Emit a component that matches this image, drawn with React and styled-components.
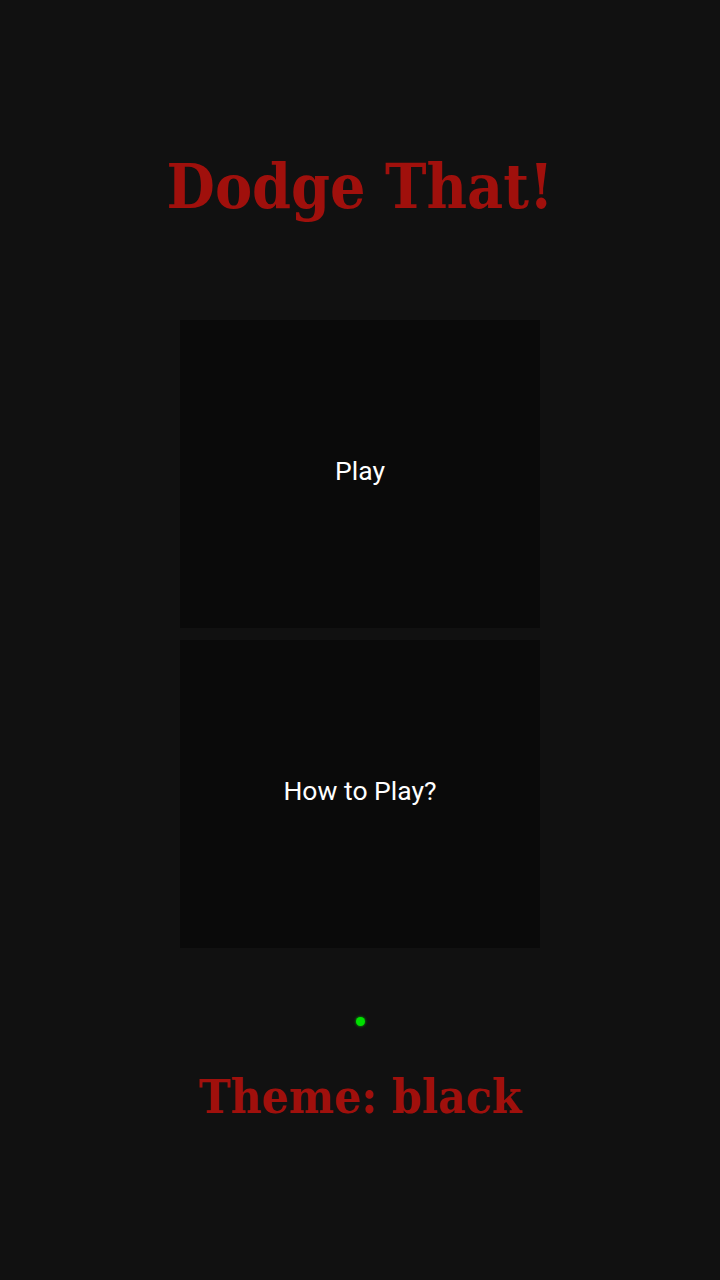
import React from "react";
import styled, { createGlobalStyle } from "styled-components";

const GlobalStyle = createGlobalStyle`
  html, body {
    margin: 0;
    padding: 0;
    background-color: #111111;
  }
`;

const Page = styled.div`
  min-height: 1280px;
  display: flex;
  flex-direction: column;
  align-items: center;
  background-color: #111111;
  box-sizing: border-box;
  padding-top: 150px;
`;

const Title = styled.h1`
  margin: 0;
  font-family: "DejaVu Serif Condensed", "DejaVu Serif", serif;
  font-stretch: condensed;
  font-weight: 700;
  font-size: ${(p) => p.size}px;
  line-height: 1.2;
  color: #a0100c;
`;

const Menu = styled.div`
  display: flex;
  flex-direction: column;
  gap: 12px;
  margin-top: 96px;
`;

const MenuButton = styled.div`
  width: 360px;
  height: 308px;
  box-sizing: border-box;
  padding-bottom: 8px;
  display: flex;
  align-items: center;
  justify-content: center;
  background-color: #0a0a0a;
  color: #ffffff;
  font-family: Roboto, "Liberation Sans", sans-serif;
  font-size: 26.5px;
  cursor: pointer;
`;

const Dot = styled.div`
  width: 9px;
  height: 9px;
  border-radius: 50%;
  background-color: #00e000;
  box-shadow: 0 0 3px #00c000;
  margin-top: 69px;
  margin-bottom: 42px;
`;

export default function App() {
  return (
    <>
      <GlobalStyle />
      <Page>
        <Title size={62}>Dodge That!</Title>
        <Menu>
          <MenuButton>Play</MenuButton>
          <MenuButton>How to Play?</MenuButton>
        </Menu>
        <Dot />
        <Title size={47.5}>Theme: black</Title>
      </Page>
    </>
  );
}
